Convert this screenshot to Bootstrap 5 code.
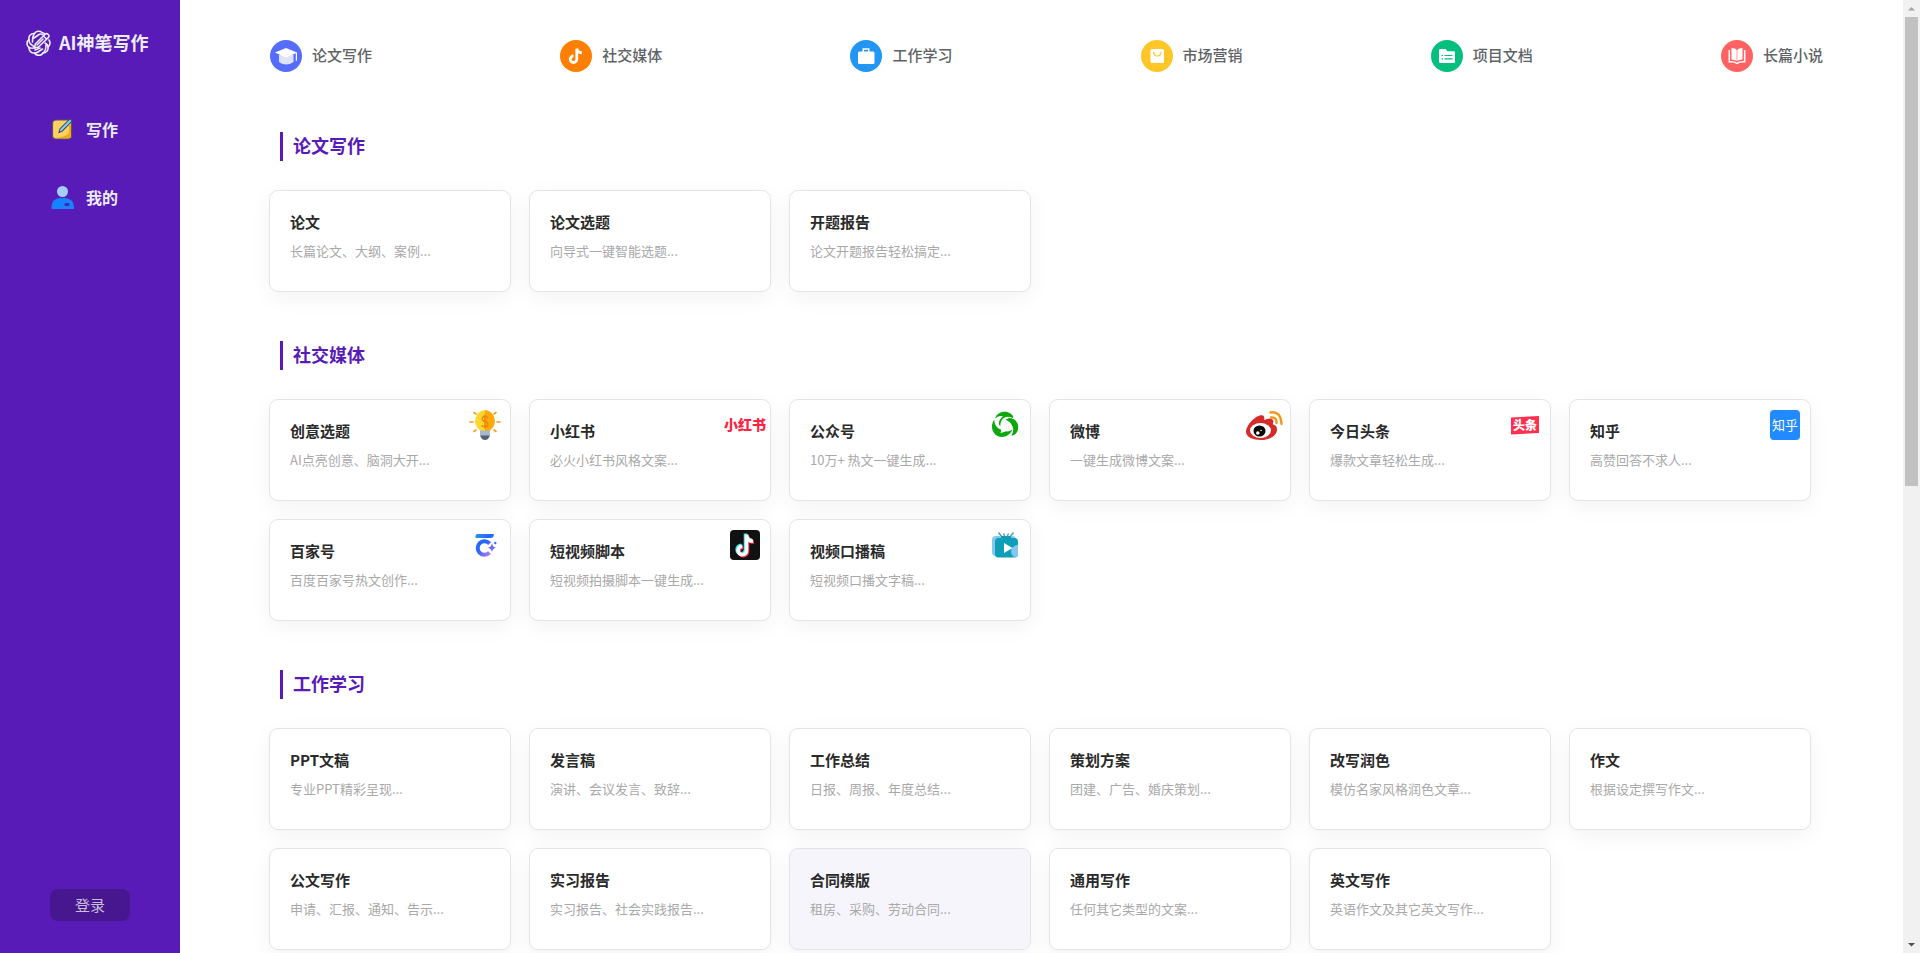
<!DOCTYPE html>
<html lang="zh-CN">
<head>
<meta charset="utf-8">
<meta name="viewport" content="width=device-width, initial-scale=1">
<title>AI神笔写作</title>
<link rel="stylesheet" href="https://cdn.jsdelivr.net/npm/bootstrap@5.3.0/dist/css/bootstrap.min.css">
<style>
  body { font-family: "Noto Sans CJK SC", "Noto Sans", sans-serif; color: #303133; }
  a { text-decoration: none; color: inherit; }

  .side { width: 180px; background: #581bb7; color: #ececf4; padding: 24px 0 32px; }
  .brand { font-size: 18px; line-height: 36px; gap: 7px; padding-left: 26px; }
  .brand span { padding-bottom: 2px; }
  .side-menu { padding: 47px 0 0 51px; gap: 28px; }
  .side-menu .nav-link { font-size: 16px; line-height: 40px; gap: 11px; padding: 0; color: inherit; }
  .login { width: 80px; height: 32px; border: 0; border-radius: 8px; background: #46178f; color: #c9bfdd; font-size: 15px; line-height: 32px; padding: 0; }

  .page { scrollbar-width: none; }
  .page::-webkit-scrollbar { display: none; }
  .topics { padding: 40px 80px 0 90px; }
  .topics .nav-link { font-size: 15px; line-height: 30px; height: 32px; gap: 10px; padding: 0; color: #606266; font-weight: 500; }
  .topics .nav-link span { padding-bottom: 2px; }
  .sections { padding: 60px 92px 60px 89px; gap: 49px; }
  .section-name { border-left: 3px solid #581bb7; color: #581bb7; font-size: 18px; line-height: 27px; padding: 0 0 2px 10px; margin: 0 0 29px 11px; }
  .tiles { display: grid; grid-template-columns: repeat(6, minmax(0, 1fr)); gap: 18px; }
  .tile { border: 1px solid #e4e4e6; border-radius: 9px; box-shadow: 0 6px 22px rgba(0, 0, 0, .05); padding: 19px 20px 31px; color: #2a2a2a; }
  .tile.current { background: #f7f5fc; }
  .tile h3 { font-size: 15px; line-height: 24px; margin: 0 0 8px; font-weight: 700; }
  .tile p { font-size: 13px; line-height: 18px; margin: 0; color: #a9a9a9; }
  .tile svg { position: absolute; top: 10px; right: 10px; overflow: visible; }
  .tile svg.wide { right: 5px; }

  .scroll-track { width: 17px; background: #f1f1f1; }
  .scroll-thumb { width: 13px; height: calc((100% - 34px) * .51); background: #c1c1c1; }
  @media (max-width: 1200px) {
    .tiles { grid-template-columns: repeat(3, minmax(0, 1fr)); }
    .topics, .sections { padding-left: 24px; padding-right: 24px; }
  }
</style>
</head>
<body>
<div class="d-flex vh-100 overflow-hidden">

  <aside class="side d-flex flex-column flex-shrink-0">
    <a href="#" class="brand d-flex align-items-center fw-bold">
      <svg width="26" height="26" viewBox="0 0 26 26" fill="none" stroke="#ececf4" stroke-width="1.6" stroke-linecap="round" stroke-linejoin="round">
        <path d="M20 9.500a5 5 0 0 0-4-7 5 5 0 0 0-7.500 1 5 5 0 0 0-5.500 6 5 5 0 0 0 0 8 5 5 0 0 0 5.500 5.500 5 5 0 0 0 8.500 0 5 5 0 0 0 5-6 5 5 0 0 0 1-7"/>
        <path d="M8.500 3.500C6.500 6 6.500 8 6.500 12M3 9.500c0 4 2 5 5 7M3 17.500c3 1.500 6 .5 9-1M8.500 23c1 .5 3-.5 8-4M17 23c3-2 3-5 3-8M8 8l5-3.500c2-1 4 0 5 1M22 17c0-2-1-3-3-4M9 20l5-2"/>
        <path d="M8.500 18l.8-4L19 4.300q1.500-1.500 3.200.2t0 3.200L12.500 17z" fill="#581bb7"/>
        <path d="M17.500 6l3 3M11 15l6-6"/>
      </svg>
      <span>AI神笔写作</span>
    </a>
    <nav class="side-menu nav flex-column">
      <a class="nav-link d-flex align-items-center fw-bold" href="#">
        <svg width="24" height="24" viewBox="0 0 24 24">
          <rect x="1.500" y="3" width="19" height="19" rx="3.500" fill="#ffd062" stroke="#55506a" stroke-width="1.200"/>
          <path d="M18 8h2v11q0 2-2 2H5q10-1 13-5z" fill="#f7a80b"/>
          <path d="M8 15.500l1-3.600L18.200 2.700q1.200-.8 2 .1t0 2L11.300 14z" fill="#7fdcf5" stroke="#44506a" stroke-width="1.100"/>
        </svg>
        写作</a>
      <a class="nav-link d-flex align-items-center fw-bold" href="#">
        <svg width="24" height="24" viewBox="0 0 24 24">
          <circle cx="11.500" cy="6.500" r="5.500" fill="#a3cdff"/>
          <path d="M.5 24v-2q0-8 8-9h6q8.500 1 8.500 9v2z" fill="#1682fb"/>
          <rect x="13.500" y="18" width="5" height="3" rx="1.500" fill="#4a22b0"/>
        </svg>
        我的</a>
    </nav>
    <button type="button" class="login mt-auto mx-auto">登录</button>
  </aside>

  <main class="page flex-grow-1 overflow-auto">
    <nav class="topics nav justify-content-between">
      <a class="nav-link d-flex align-items-center" href="#">
        <svg width="32" height="32" viewBox="0 0 32 32"><circle cx="16" cy="16" r="16" fill="#566cff"/><path d="M9 15v7q7 5 14.500 0v-7z" fill="#dde2ff"/><path d="M16 8l11 4.500v8.200h-1.200v-7.500L16 17.500 5 12.500z" fill="#fff"/></svg>
        <span>论文写作</span></a>
      <a class="nav-link d-flex align-items-center" href="#">
        <svg width="32" height="32" viewBox="0 0 32 32"><circle cx="16" cy="16" r="16" fill="#ff8000"/><path d="M16.800 9v10.200a3.300 3.300 0 1 1-3.300-3.300M16.800 8.500q.5 4 5 4.300" fill="none" stroke="#fff" stroke-width="2.800"/></svg>
        <span>社交媒体</span></a>
      <a class="nav-link d-flex align-items-center" href="#">
        <svg width="32" height="32" viewBox="0 0 32 32"><circle cx="16" cy="16" r="16" fill="#2196f3"/><rect x="8" y="11.500" width="16.500" height="12.500" rx="1.500" fill="#fff"/><path d="M13.300 12V9h5.500v3" fill="none" stroke="#fff" stroke-width="1.500"/></svg>
        <span>工作学习</span></a>
      <a class="nav-link d-flex align-items-center" href="#">
        <svg width="32" height="32" viewBox="0 0 32 32"><circle cx="16" cy="16" r="16" fill="#ffc627"/><rect x="9.500" y="9" width="13.500" height="14" rx="1.500" fill="#fff"/><path d="M12.500 12q.5 4 3.800 4t3.700-4" fill="none" stroke="#ffc627" stroke-width="1.200"/></svg>
        <span>市场营销</span></a>
      <a class="nav-link d-flex align-items-center" href="#">
        <svg width="32" height="32" viewBox="0 0 32 32"><circle cx="16" cy="16" r="16" fill="#05bf7f"/><path d="M8 10.300Q8 9 9.300 9h5.200l2 2.300h6.200q1.300 0 1.300 1.200v9.200q0 1.300-1.300 1.300H9.300Q8 23 8 21.700z" fill="#fff"/><path d="M10.500 15.500h1.500m1.500 0h8M10.500 18.800h1.500m1.500 0h8" stroke="#05bf7f" stroke-width="1.200"/></svg>
        <span>项目文档</span></a>
      <a class="nav-link d-flex align-items-center" href="#">
        <svg width="32" height="32" viewBox="0 0 32 32"><circle cx="16" cy="16" r="16" fill="#ff6262"/><path d="M10.500 8q4 0 5.200 2v11q-1.500-1.500-5.200-1.500zM21.500 8q-4 0-5.200 2v11q1.500-1.500 5.200-1.500z" fill="#fff"/><path d="M8.300 10v11.700q5.200-.3 7.700 1.600 2.500-1.900 7.700-1.600V10" fill="none" stroke="#fff" stroke-width="1.500"/></svg>
        <span>长篇小说</span></a>
    </nav>

    <div class="sections d-flex flex-column">
      <section>
        <h2 class="section-name fw-bold">论文写作</h2>
        <div class="tiles">
          <a href="#" class="card tile"><h3>论文</h3><p>长篇论文、大纲、案例...</p></a>
          <a href="#" class="card tile"><h3>论文选题</h3><p>向导式一键智能选题...</p></a>
          <a href="#" class="card tile"><h3>开题报告</h3><p>论文开题报告轻松搞定...</p></a>
        </div>
      </section>

      <section>
        <h2 class="section-name fw-bold">社交媒体</h2>
        <div class="tiles">
          <a href="#" class="card tile"><h3>创意选题</h3><p>AI点亮创意、脑洞大开...</p>
            <svg width="30" height="30" viewBox="0 0 30 30"><path d="M0 12h3M27 12h3M4 2.500l2 1.500M26 2.500L24 4M4 21.500L6 20M26 21.500L24 20" stroke="#f79b1b" stroke-width="1.600" stroke-linecap="round"/><path d="M15 0a10.500 11 0 0 0-6 19.500l2 2h4z" fill="#ffd62f"/><path d="M15 0a10.500 11 0 0 1 6 19.500l-2 2h-4z" fill="#ffa90a"/><path d="M15 4.500v14M18 8q-1-1.800-3-1.800-2.700.2-2.700 2.500T15 11.500t2.800 2.800-2.800 2.500-3-1.800" fill="none" stroke="#e88709" stroke-width="1.500"/><path d="M10 20.500h10V26H10z" fill="#a9b9c9"/><path d="M10.500 25.500h9v1q-1.500 3.500-4.500 3.500t-4.500-3.500z" fill="#556179"/></svg></a>
          <a href="#" class="card tile"><h3>小红书</h3><p>必火小红书风格文案...</p>
            <svg class="wide" width="40" height="30" viewBox="0 0 40 30"><text x="-1" y="20" font-size="14" font-weight="900" fill="#ff2442">小红书</text></svg></a>
          <a href="#" class="card tile"><h3>公众号</h3><p>10万+ 热文一键生成...</p>
            <svg width="30" height="30" viewBox="0 0 30 30" fill="#0aa80a"><path d="M5 8.500C7 2 15 0 20.500 3.500 23 5.200 24 7.500 22.800 8 15 4.500 10.500 9 10.300 16 7.500 14 9 10 13 6 9 5.500 6.500 7 5 8.500z"/><path d="M19.500 8C26.500 8.500 30 15 27.300 21.500 26 24.500 22 26 21.500 25.200 25.500 19 22 12.500 15.500 9.500z"/><path d="M4.300 9.500C0 15.500 2 23 7.500 26c5.500 2.500 12 .2 15-6.500-2.500 1.800-4.500 2.200-6 1.700l-6 1.800 .8-3.200C6.500 18 4.300 14.500 4.300 9.500z"/></svg></a>
          <a href="#" class="card tile"><h3>微博</h3><p>一键生成微博文案...</p>
            <svg width="30" height="30" viewBox="0 0 30 30"><path d="M-4 22C-4 14 8 3 13 5.500q2 1.200 1 4.500 7-3 9 0 .8 1.500-.3 4.300 4.300 1 4.300 5.200C27 26 19 30 11 30S-4 27-4 22z" fill="#d52b2b"/><ellipse cx="10.500" cy="20.500" rx="10.500" ry="7.500" fill="#fff"/><ellipse cx="9.500" cy="21" rx="6" ry="5.600" fill="#050505"/><circle cx="7.800" cy="23" r="1.800" fill="#fff"/><circle cx="11" cy="20.500" r=".8" fill="#fff"/><path d="M20.500 2.500q10-2 11 11.500M21 7.500q6-.5 5.500 5.500" fill="none" stroke="#f2971b" stroke-width="2.400" stroke-linecap="round"/></svg></a>
          <a href="#" class="card tile"><h3>今日头条</h3><p>爆款文章轻松生成...</p>
            <svg width="30" height="30" viewBox="0 0 30 30"><path d="M1 7.500L29 6v17L1 24.500z" fill="#ff2f4f"/><text x="3" y="20" font-size="12" font-weight="900" fill="#fff">头条</text></svg></a>
          <a href="#" class="card tile"><h3>知乎</h3><p>高赞回答不求人...</p>
            <svg width="30" height="30" viewBox="0 0 30 30"><rect width="30" height="30" rx="4" fill="#218aff"/><text x="2" y="20" font-size="13" fill="#fff">知乎</text></svg></a>
          <a href="#" class="card tile"><h3>百家号</h3><p>百度百家号热文创作...</p>
            <svg width="30" height="30" viewBox="0 0 30 30"><defs><linearGradient id="bj" x1="0" y1="0" x2="1" y2="1"><stop offset=".4" stop-color="#2868fa"/><stop offset="1" stop-color="#b67cf5"/></linearGradient><linearGradient id="bt"><stop offset="0" stop-color="#2595ff"/><stop offset=".6" stop-color="#2868fa"/></linearGradient></defs><path d="M5.500 8V6q0-2 2-2h16.300v1q-.3 3-3 3z" fill="url(#bt)"/><path d="M19.700 13.600a6.800 6.800 0 1 0-.2 9" fill="none" stroke="url(#bj)" stroke-width="4"/><path d="M22 13q.5 4 4 4.700-3.500.8-4 4.500-.5-3.700-4.300-4.500 3.800-.7 4.300-4.700z" fill="#6c6cf8"/><circle cx="25.300" cy="13" r="1.200" fill="#3d6bfa"/></svg></a>
          <a href="#" class="card tile"><h3>短视频脚本</h3><p>短视频拍摄脚本一键生成...</p>
            <svg width="30" height="30" viewBox="0 0 30 30"><rect width="30" height="30" rx="4" fill="#111"/><g fill="none" stroke-width="3.600"><path d="M15.500 3.500v16a4.200 4.200 0 1 1-4.200-4.200M15.500 4q.5 6 6.500 6.200" stroke="#25e8e4"/><path d="M17.500 5.500v16a4.200 4.200 0 1 1-4.200-4.200M17.500 6q.5 6 6.500 6.200" stroke="#fb3150"/><path d="M16.500 4.500v16a4.200 4.200 0 1 1-4.200-4.200M16.500 5q.5 6 6.500 6.200" stroke="#fff"/></g></svg></a>
          <a href="#" class="card tile"><h3>视频口播稿</h3><p>短视频口播文字稿...</p>
            <svg width="30" height="30" viewBox="0 0 30 30"><path d="M8.500 2.500L12 7M13.500 3.500L15 7M23.500 2.500L20 7M18.500 3.500L17 7" stroke="#3aa6c0" stroke-width="1.400"/><rect x="2" y="6" width="24" height="20" rx="4" fill="#83c6ee"/><path d="M11 6h10v3H11z" fill="#2494ad"/><rect x="5" y="8" width="23" height="19.500" rx="3.500" fill="#0e9fb8"/><path d="M28 14.500v10q0 3-3 3-4-2-4-6.500t7-6.500z" fill="#83c6ee"/><path d="M14 13l8.500 5-8.500 5z" fill="#fff"/></svg></a>
        </div>
      </section>

      <section>
        <h2 class="section-name fw-bold">工作学习</h2>
        <div class="tiles">
          <a href="#" class="card tile"><h3>PPT文稿</h3><p>专业PPT精彩呈现...</p></a>
          <a href="#" class="card tile"><h3>发言稿</h3><p>演讲、会议发言、致辞...</p></a>
          <a href="#" class="card tile"><h3>工作总结</h3><p>日报、周报、年度总结...</p></a>
          <a href="#" class="card tile"><h3>策划方案</h3><p>团建、广告、婚庆策划...</p></a>
          <a href="#" class="card tile"><h3>改写润色</h3><p>模仿名家风格润色文章...</p></a>
          <a href="#" class="card tile"><h3>作文</h3><p>根据设定撰写作文...</p></a>
          <a href="#" class="card tile"><h3>公文写作</h3><p>申请、汇报、通知、告示...</p></a>
          <a href="#" class="card tile"><h3>实习报告</h3><p>实习报告、社会实践报告...</p></a>
          <a href="#" class="card tile current"><h3>合同模版</h3><p>租房、采购、劳动合同...</p></a>
          <a href="#" class="card tile"><h3>通用写作</h3><p>任何其它类型的文案...</p></a>
          <a href="#" class="card tile"><h3>英文写作</h3><p>英语作文及其它英文写作...</p></a>
        </div>
      </section>
    </div>
  </main>

  <div class="scroll-track d-flex flex-column align-items-center flex-shrink-0" aria-hidden="true">
    <svg class="flex-shrink-0" width="17" height="17" viewBox="0 0 17 17"><path d="M5 10.500L8.500 7l3.500 3.500z" fill="#a3a3a3"/></svg>
    <div class="scroll-thumb"></div>
    <svg class="mt-auto flex-shrink-0" width="17" height="17" viewBox="0 0 17 17"><path d="M5 7l3.500 3.500L12 7z" fill="#505050"/></svg>
  </div>
</div>
<script src="https://cdn.jsdelivr.net/npm/bootstrap@5.3.0/dist/js/bootstrap.bundle.min.js"></script>
</body>
</html>
